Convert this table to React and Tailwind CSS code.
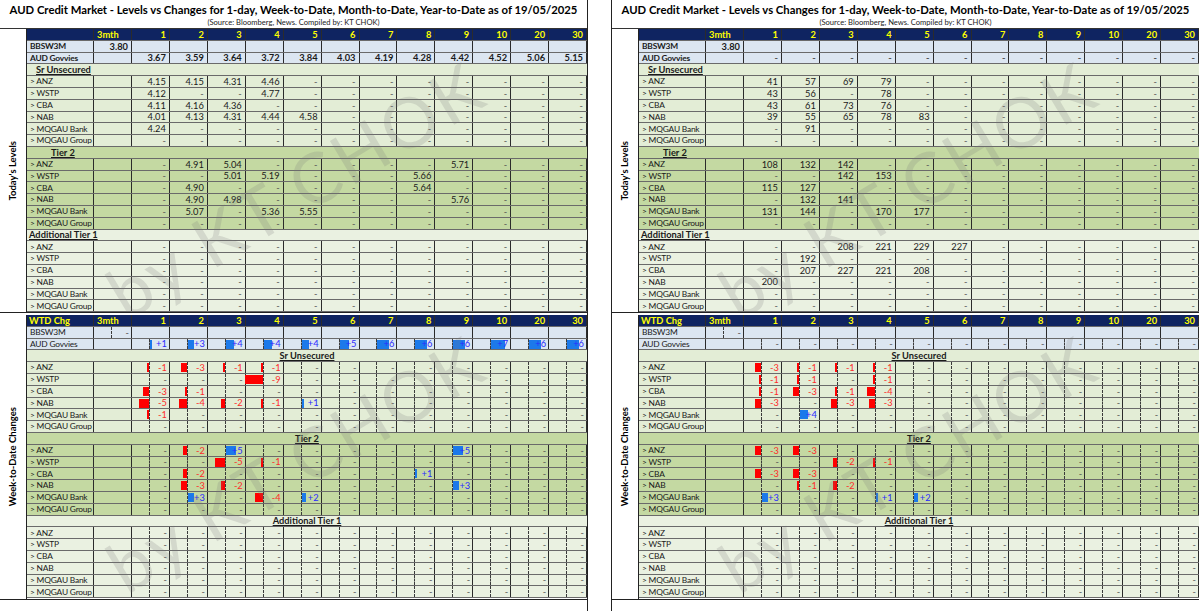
import React from "react";

const TENORS = ["1", "2", "3", "4", "5", "6", "7", "8", "9", "10", "20", "30"];
const NAMES = ["> ANZ", "> WSTP", "> CBA", "> NAB", "> MQGAU Bank", "> MQGAU Group"];
const GRID = "grid grid-cols-[67px_38px_repeat(12,minmax(0,1fr))]";
const ROW = "h-[11.8px] border-b border-[#6a6a6a]";
const VLINE = "border-r border-[#2b2b2b]";

const SECTIONS = [
  { key: "sr", title: "Sr Unsecured", bg: "bg-[#e3edd6]", indent: "pl-[9px]" },
  { key: "t2", title: "Tier 2", bg: "bg-[#c4d9a2]", indent: "pl-[24px]" },
  { key: "at1", title: "Additional Tier 1", bg: "bg-[#eaf1e1]", indent: "pl-[2px]" },
];

const PANELS = [
  {
    lv: {
      bb: "3.80",
      gov: "3.67 3.59 3.64 3.72 3.84 4.03 4.19 4.28 4.42 4.52 5.06 5.15",
      sr: ["4.15 4.15 4.31 4.46", "4.12 - - 4.77", "4.11 4.16 4.36", "4.01 4.13 4.31 4.44 4.58", "4.24", ""],
      t2: [
        "- 4.91 5.04 - - - - - 5.71",
        "- - 5.01 5.19 - - - 5.66",
        "- 4.90 - - - - - 5.64",
        "- 4.90 4.98 - - - - - 5.76",
        "- 5.07 - 5.36 5.55",
        "",
      ],
      at1: ["", "", "", "", "", ""],
    },
    chg: {
      gov: "+1 +3 +4 +4 +4 +5 +6 +6 +6 +7 +6 +6",
      sr: ["-1 -3 -1 -1", "- - - -9", "-3 -1", "-5 -4 -2 -1 +1", "-1", ""],
      t2: ["- -2 +5 - - - - - +5", "- - -5 -1", "- -2 - - - - - +1", "- -3 -2 - - - - - +3", "- +3 - -4 +2", ""],
      at1: ["", "", "", "", "", ""],
    },
  },
  {
    lv: {
      bb: "3.80",
      gov: "",
      sr: ["41 57 69 79", "43 56 - 78", "43 61 73 76", "39 55 65 78 83", "- 91", ""],
      t2: ["108 132 142", "- - 142 153", "115 127", "- 132 141", "131 144 - 170 177", ""],
      at1: ["- - 208 221 229 227", "- 192", "- 207 227 221 208", "200", "", ""],
    },
    chg: {
      gov: "",
      sr: ["-3 -1 -1 -1", "-1 -1 - -1", "-1 -3 -1 -4", "-3 - -3 -3", "- +4", ""],
      t2: ["-3 -3", "- - -2 -1", "-3 -3", "- -1 -2", "+3 - - +1 +2", ""],
      at1: ["", "", "", "", "", ""],
    },
  },
];

const pad = (s) => {
  const a = s ? s.split(" ") : [];
  while (a.length < 12) a.push("-");
  return a;
};

const Dash = () => <span className="text-[#555]">-</span>;

const Label = ({ children, bold }) => (
  <div
    className={`flex items-center overflow-hidden whitespace-nowrap pl-[3px] text-[8.4px] tracking-[-0.2px] ${
      bold ? "font-bold" : ""
    } ${VLINE}`}
  >
    {children}
  </div>
);

const HeaderRow = ({ first }) => (
  <div className={`${GRID} ${ROW} border-[#1b1b1b] bg-[#0f2461] font-bold text-[#ffff00]`}>
    <div className={`flex items-center whitespace-nowrap pl-[2px] ${VLINE}`}>{first}</div>
    <div className={`flex items-center pl-[3px] ${VLINE}`}>3mth</div>
    {TENORS.map((t) => (
      <div key={t} className={`flex items-center justify-end pr-[3px] ${VLINE}`}>
        {t}
      </div>
    ))}
  </div>
);

const Watermark = ({ top }) => (
  <div
    className={`pointer-events-none absolute left-[268px] ${top} -translate-x-1/2 -translate-y-1/2 rotate-[-31deg] whitespace-nowrap font-['Lato'] text-[70px] leading-none tracking-[0.04em] text-[#7a7a7a]/20`}
  >
    by KT CHOK
  </div>
);

// levels: yields (left) / spreads (right)
const LevelsTable = ({ d }) => (
  <div className="relative flex flex-1 flex-col overflow-hidden">
    <HeaderRow first="" />
    <div className={`${GRID} ${ROW} bg-[#dce6f1]`}>
      <Label bold>BBSW3M</Label>
      <div className={`flex items-center justify-end pr-[3px] font-bold ${VLINE}`}>{d.bb}</div>
      {TENORS.map((t) => (
        <div key={t} className={VLINE} />
      ))}
    </div>
    <div className={`${GRID} ${ROW} bg-[#dce6f1]`}>
      <Label bold>AUD Govvies</Label>
      <div className={VLINE} />
      {pad(d.gov).map((v, i) => (
        <div key={i} className={`flex items-center justify-end pr-[3px] font-bold ${VLINE}`}>
          {v === "-" ? <Dash /> : v}
        </div>
      ))}
    </div>
    {SECTIONS.map((s) => (
      <React.Fragment key={s.key}>
        <div className={`${ROW} ${s.bg} flex items-center whitespace-nowrap ${s.indent} font-bold`}>
          <span className="underline underline-offset-[1px]">{s.title}</span>
        </div>
        {d[s.key].map((r, ri) => (
          <div key={ri} className={`${GRID} ${ROW} ${s.bg}`}>
            <Label>{NAMES[ri]}</Label>
            <div className={VLINE} />
            {pad(r).map((v, i) => (
              <div key={i} className={`flex items-center justify-end pr-[3px] ${VLINE}`}>
                {v === "-" ? <Dash /> : v}
              </div>
            ))}
          </div>
        ))}
      </React.Fragment>
    ))}
    <Watermark top="top-[160px]" />
  </div>
);

const ChgCell = ({ t }) => {
  const v = t === "-" ? null : parseInt(t, 10);
  const w = v ? Math.min(Math.abs(v) * 1.95, 18) : 0;
  return (
    <div className={`flex ${VLINE}`}>
      <div className="relative flex-1 border-r border-dashed border-[#3a3a3a]">
        {v < 0 && <div className="absolute right-0 top-[1px] h-[9px] bg-[#ff0000]" style={{ width: w }} />}
      </div>
      <div className="relative flex flex-1 items-center justify-end pr-[2px]">
        {v > 0 && <div className="absolute left-0 top-[1px] h-[9px] bg-[#1c79ea]" style={{ width: w }} />}
        {v === null ? (
          <Dash />
        ) : (
          <span className={`relative ${v < 0 ? "text-[#ff2b2b]" : "text-[#2a2aff]"}`}>{v > 0 ? `+${v}` : v}</span>
        )}
      </div>
    </div>
  );
};

// week-to-date changes with data bars
const ChangeTable = ({ d }) => (
  <div className="relative flex flex-1 flex-col overflow-hidden">
    <HeaderRow first="WTD Chg" />
    <div className={`${GRID} ${ROW} bg-[#dce6f1]`}>
      <Label>BBSW3M</Label>
      <div className={`flex ${VLINE}`}>
        <div className="flex-1 border-r border-dashed border-[#3a3a3a]" />
        <div className="flex flex-1 items-center justify-end pr-[2px]">
          <Dash />
        </div>
      </div>
      {TENORS.map((t) => (
        <div key={t} className={VLINE} />
      ))}
    </div>
    <div className={`${GRID} ${ROW} bg-[#dce6f1]`}>
      <Label>AUD Govvies</Label>
      <div className={VLINE} />
      {pad(d.gov).map((t, i) => (
        <ChgCell key={i} t={t} />
      ))}
    </div>
    {SECTIONS.map((s) => (
      <React.Fragment key={s.key}>
        <div className={`${ROW} ${s.bg} flex items-center justify-center whitespace-nowrap font-bold`}>
          <span className="underline underline-offset-[1px]">{s.title}</span>
        </div>
        {d[s.key].map((r, ri) => (
          <div key={ri} className={`${GRID} ${ROW} ${s.bg}`}>
            <Label>{NAMES[ri]}</Label>
            <div className={VLINE} />
            {pad(r).map((t, i) => (
              <ChgCell key={i} t={t} />
            ))}
          </div>
        ))}
      </React.Fragment>
    ))}
    <Watermark top="top-[148px]" />
  </div>
);

const SideLabel = ({ children }) => (
  <div className="flex w-[27px] shrink-0 items-center justify-center border-r border-[#222]">
    <span className="rotate-180 whitespace-nowrap text-[9.5px] font-bold text-black [writing-mode:vertical-rl]">
      {children}
    </span>
  </div>
);

const Panel = ({ p, side }) => (
  <div
    className={`flex h-[611px] w-[588px] shrink-0 flex-col ${
      side === "left" ? "border-r border-[#222]" : "border-l border-[#222]"
    }`}
  >
    <div className="flex h-[29px] shrink-0 flex-col items-center border-b border-[#333] pt-[3px]">
      <div className="whitespace-nowrap text-[11.3px] font-bold leading-[14px] text-black">
        AUD Credit Market - Levels vs Changes for 1-day, Week-to-Date, Month-to-Date, Year-to-Date as of 19/05/2025
      </div>
      <div className="mt-[1px] whitespace-nowrap text-[7.6px] leading-[9px] text-[#222]">
        (Source: Bloomberg, News. Compiled by: KT CHOK)
      </div>
    </div>
    <div className="flex h-[284px] shrink-0 border-b border-[#222]">
      <SideLabel>Today's Levels</SideLabel>
      <LevelsTable d={p.lv} />
    </div>
    <div className="mt-[2px] flex h-[285px] shrink-0 border-b border-[#222]">
      <SideLabel>Week-to-Date Changes</SideLabel>
      <ChangeTable d={p.chg} />
    </div>
  </div>
);

export default function App() {
  return (
    <div className="flex h-[611px] w-[1199px] gap-[23px] overflow-hidden bg-white font-['Lato',sans-serif] text-[9.3px] leading-none text-[#1a1a1a]">
      <Panel p={PANELS[0]} side="left" />
      <Panel p={PANELS[1]} side="right" />
    </div>
  );
}
